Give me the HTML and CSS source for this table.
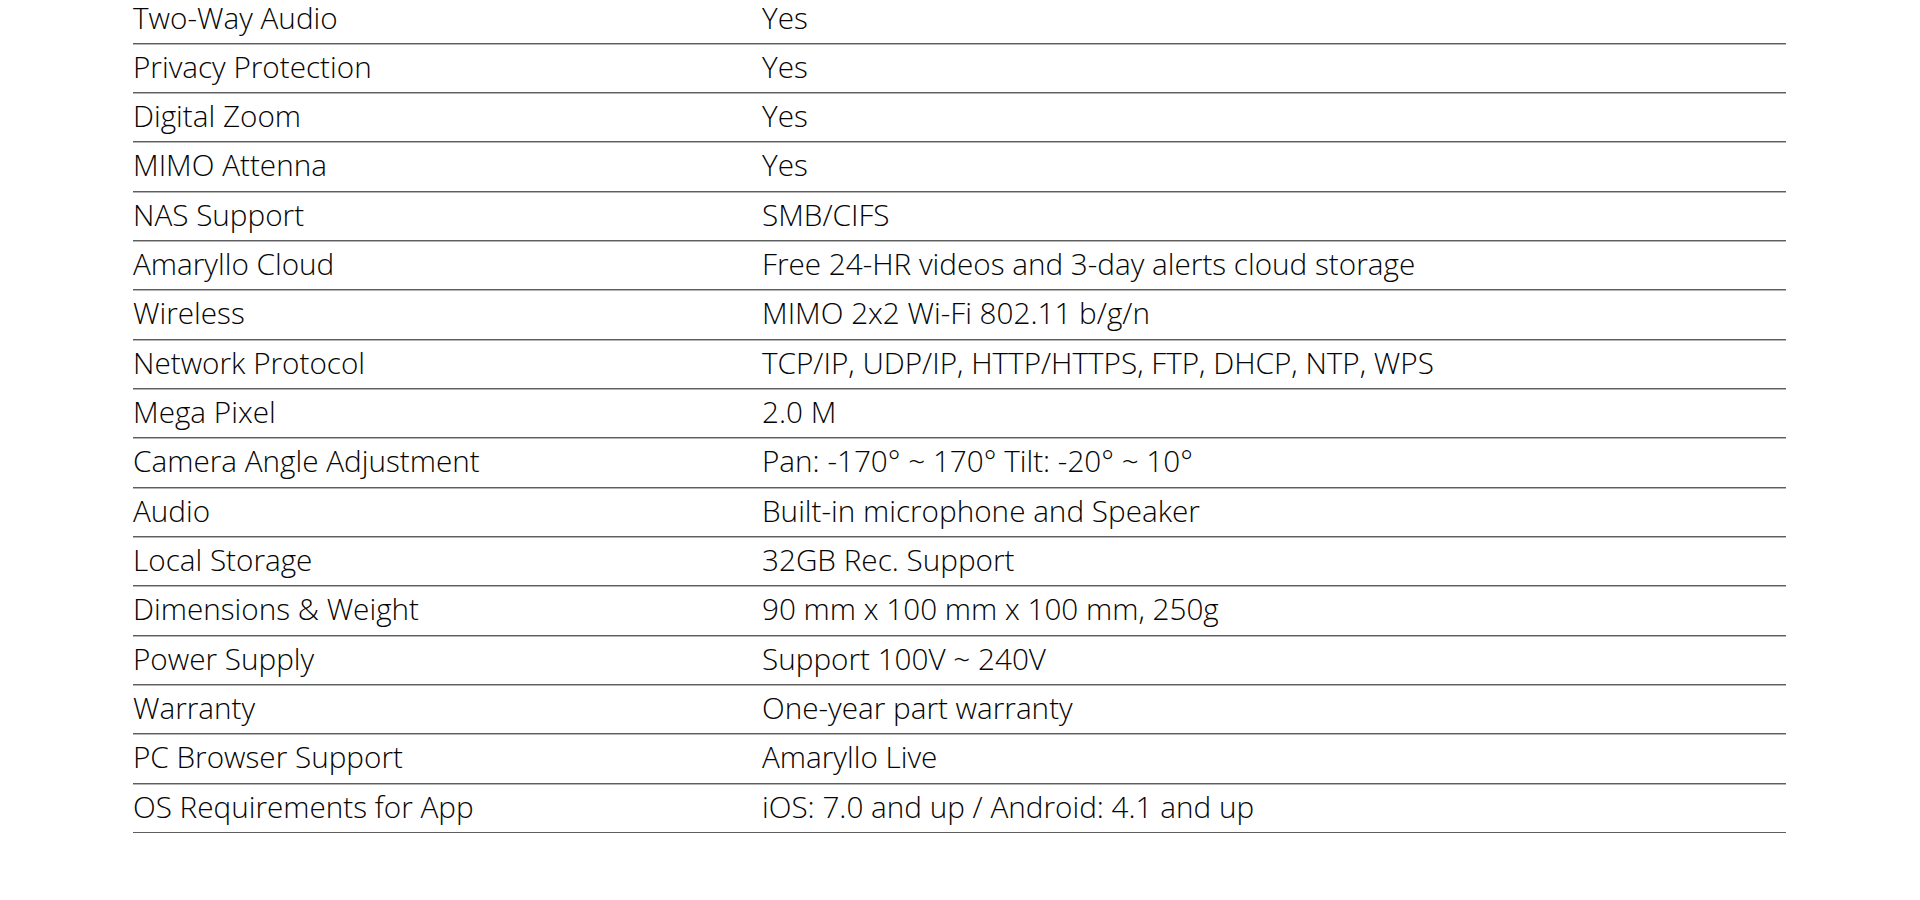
FILE: index.html
```html
<!DOCTYPE html>
<html lang="en">
<head>
<meta charset="utf-8">
<title>Specifications</title>
<link rel="stylesheet" href="styles.css">
</head>
<body>
<div class="specs">
  <div class="row"><div class="k">Two-Way Audio</div><div class="v">Yes</div></div>
  <div class="row"><div class="k">Privacy Protection</div><div class="v">Yes</div></div>
  <div class="row"><div class="k">Digital Zoom</div><div class="v">Yes</div></div>
  <div class="row"><div class="k">MIMO Attenna</div><div class="v">Yes</div></div>
  <div class="row"><div class="k">NAS Support</div><div class="v">SMB/CIFS</div></div>
  <div class="row"><div class="k">Amaryllo Cloud</div><div class="v">Free 24-HR videos and 3-day alerts cloud storage</div></div>
  <div class="row"><div class="k">Wireless</div><div class="v">MIMO 2x2 Wi-Fi 802.11 b/g/n</div></div>
  <div class="row"><div class="k">Network Protocol</div><div class="v">TCP/IP, UDP/IP, HTTP/HTTPS, FTP, DHCP, NTP, WPS</div></div>
  <div class="row"><div class="k">Mega Pixel</div><div class="v">2.0 M</div></div>
  <div class="row"><div class="k">Camera Angle Adjustment</div><div class="v">Pan: -170° ~ 170° Tilt: -20° ~ 10°</div></div>
  <div class="row"><div class="k">Audio</div><div class="v">Built-in microphone and Speaker</div></div>
  <div class="row"><div class="k">Local Storage</div><div class="v">32GB Rec. Support</div></div>
  <div class="row"><div class="k">Dimensions &amp; Weight</div><div class="v">90 mm x 100 mm x 100 mm, 250g</div></div>
  <div class="row"><div class="k">Power Supply</div><div class="v">Support 100V ~ 240V</div></div>
  <div class="row"><div class="k">Warranty</div><div class="v">One-year part warranty</div></div>
  <div class="row"><div class="k">PC Browser Support</div><div class="v">Amaryllo Live</div></div>
  <div class="row"><div class="k">OS Requirements for App</div><div class="v">iOS: 7.0 and up / Android: 4.1 and up</div></div>
</div>
</body>
</html>
```
FILE: styles.css
```css
html, body {
  margin: 0;
  padding: 0;
  background: #ffffff;
}
body {
  font-family: "Open Sans", "Liberation Sans", sans-serif;
  font-weight: 300;
  font-size: 29.7px;
  color: #050505;
}
.specs {
  width: 1653px;
  margin: -5.5px 0 0 133px;
}
.row {
  display: grid;
  grid-template-columns: 629px 1fr;
  line-height: 42px;
  padding-top: 2px;
  padding-bottom: 4.33px;
  border-bottom: 1px solid #5e5e5e;
  box-shadow: 0 1px 0 #b4b4b4;
}
.k, .v {
  white-space: nowrap;
}
```
